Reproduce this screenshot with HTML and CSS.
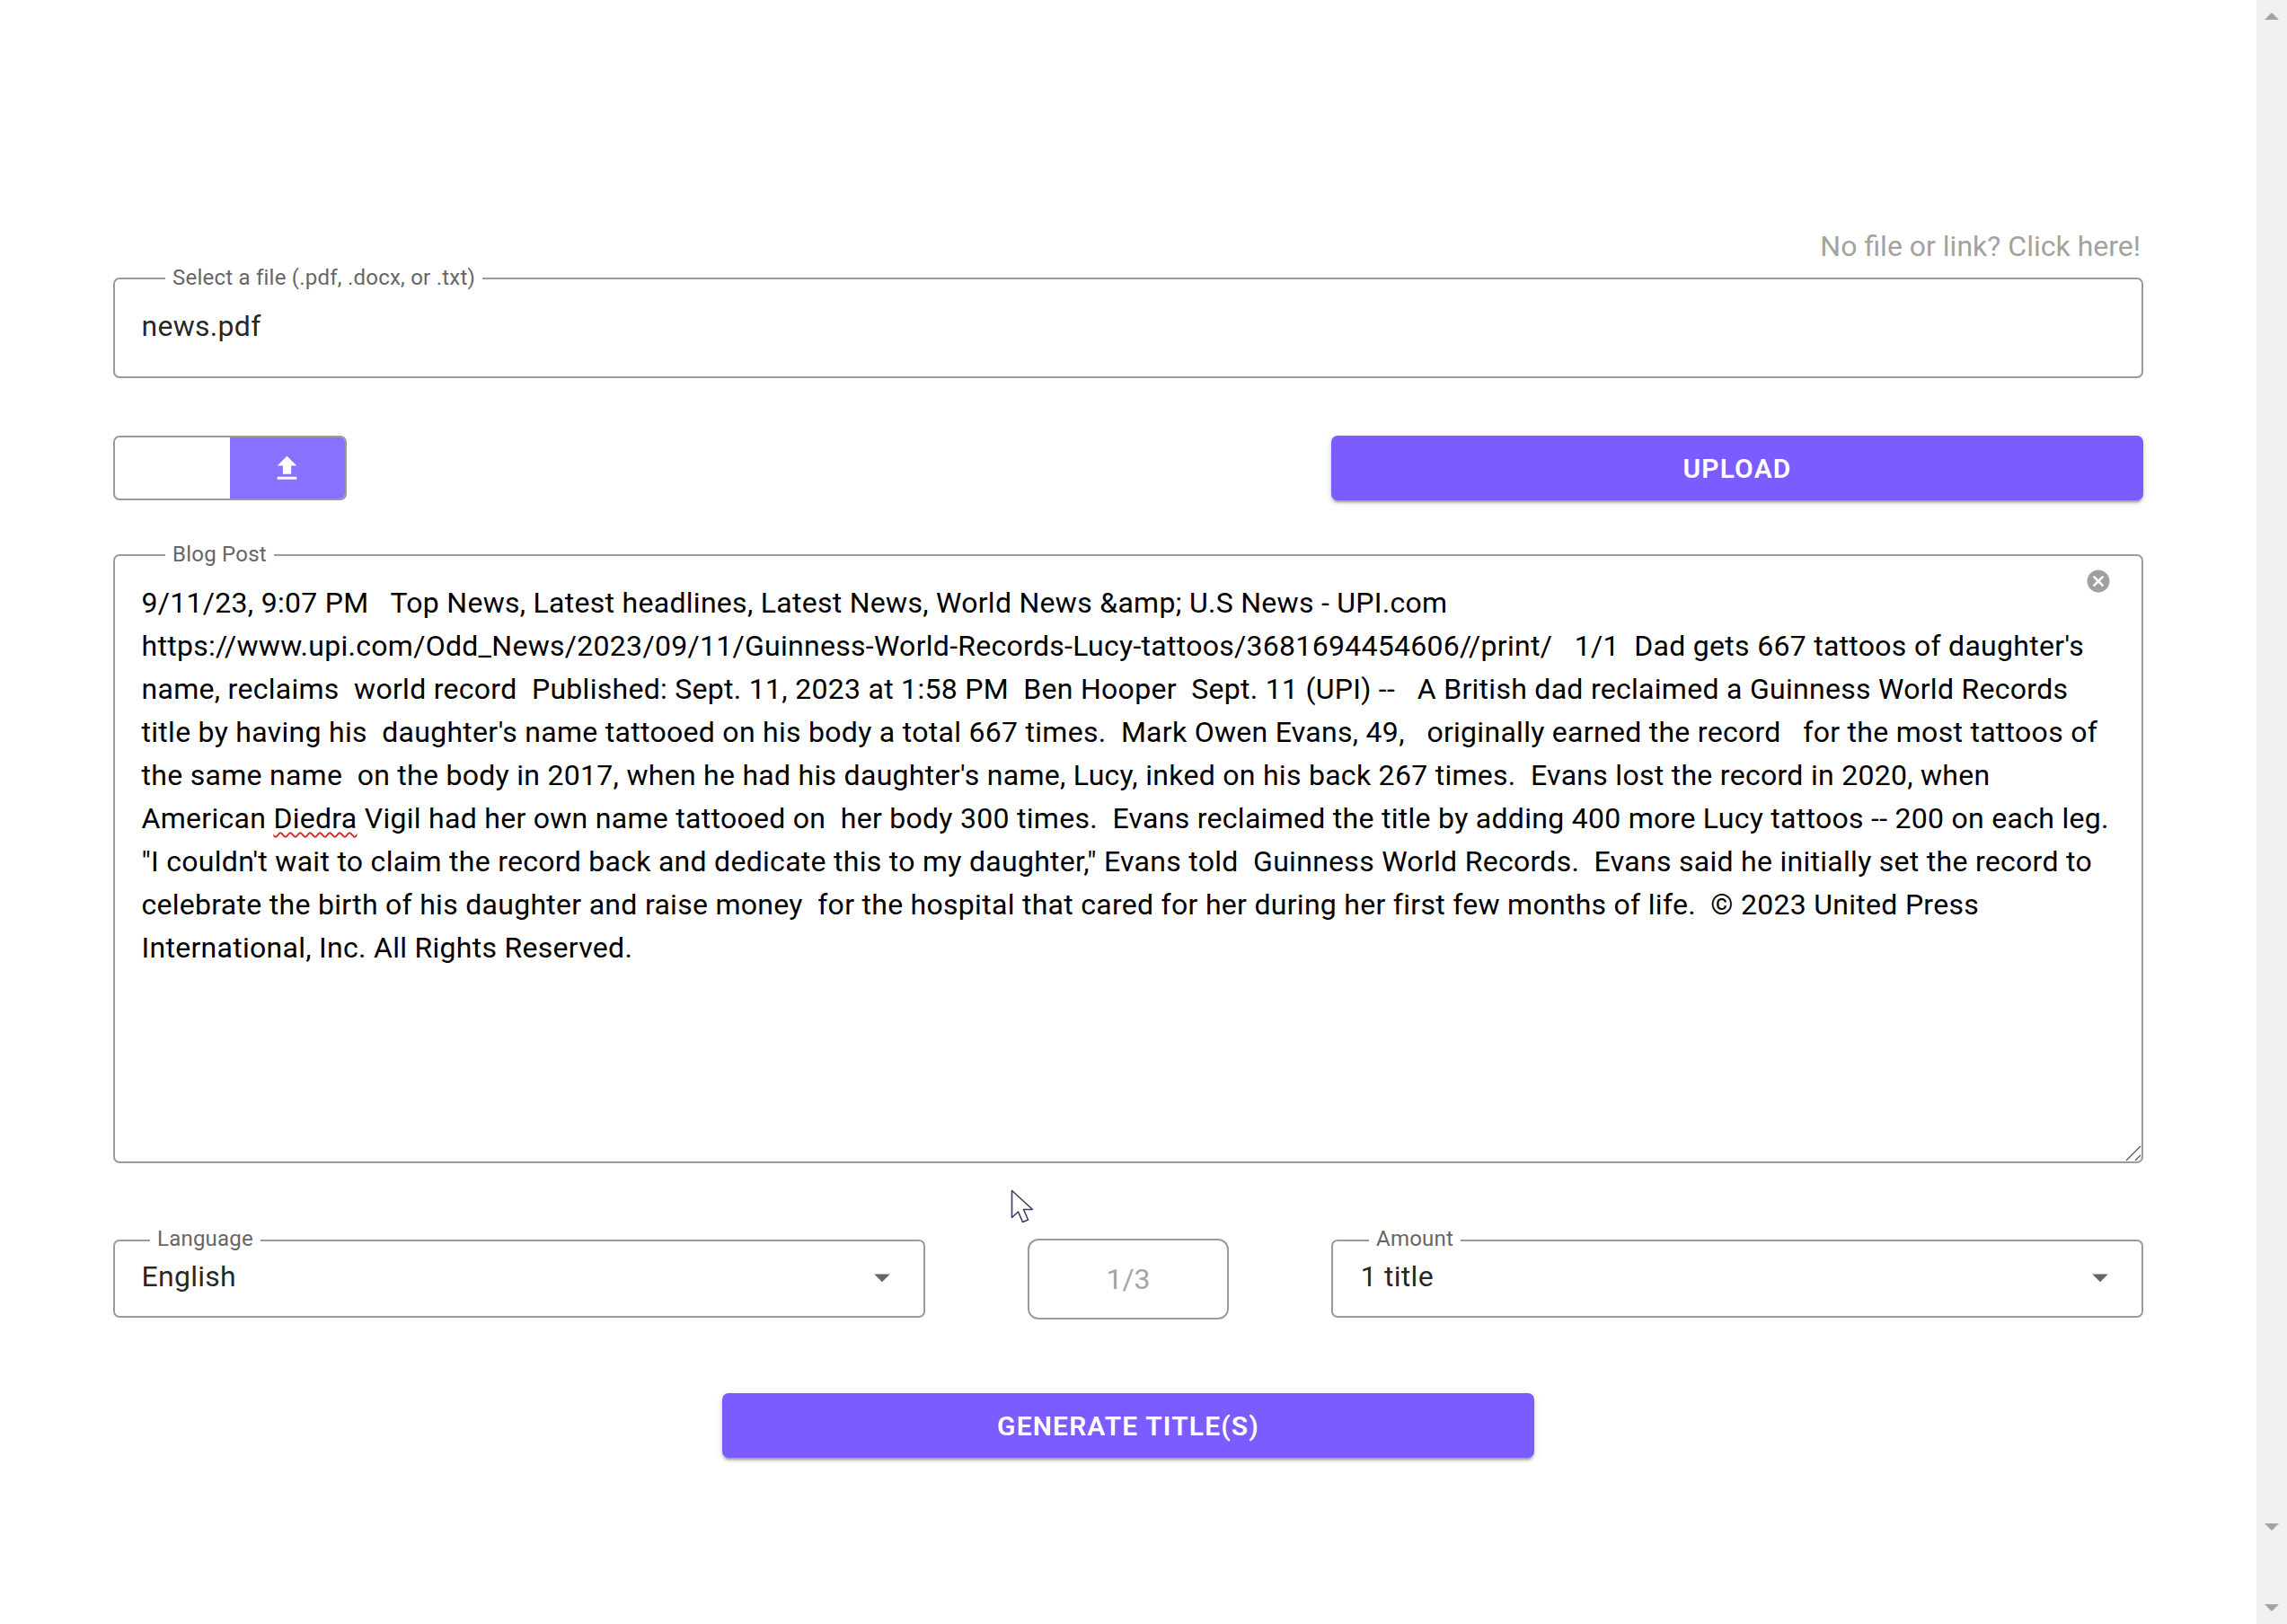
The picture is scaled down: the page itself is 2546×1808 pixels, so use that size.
FILE: index.html
```html
<!DOCTYPE html>
<html lang="en">
<head>
<meta charset="utf-8">
<title>Generate titles</title>
<link rel="stylesheet" href="styles.css">
</head>
<body>
<div class="page">
  <main class="main">
    <p class="hint">No file or link? Click here!</p>
    <fieldset class="field field-file">
      <legend class="label label-wide">Select a file (.pdf, .docx, or .txt)</legend>
      <div class="file-value">news.pdf</div>
    </fieldset>
    <div class="upload-row">
      <div class="picker">
        <div class="picker-empty"></div>
        <div class="picker-btn">
          <svg class="picker-icon" viewBox="0 0 24 24"><path d="M5 20h14v-2H5v2zm0-10h4v6h6v-6h4l-7-7-7 7z"/></svg>
        </div>
      </div>
      <button class="btn btn-upload" type="button">Upload</button>
    </div>
    <fieldset class="field field-post">
      <legend class="label label-wide">Blog Post</legend>
      <svg class="clear-icon" viewBox="0 0 24 24"><path d="M12 2C6.47 2 2 6.47 2 12s4.47 10 10 10 10-4.47 10-10S17.53 2 12 2zm5 13.59L15.59 17 12 13.41 8.41 17 7 15.59 10.59 12 7 8.41 8.41 7 12 10.59 15.59 7 17 8.41 13.41 12 17 15.59z"/></svg>
      <div class="post-text">
        <div class="post-block">9/11/23, 9:07 PM   Top News, Latest headlines, Latest News, World News &amp;amp; U.S News - UPI.com</div>
        <div class="post-block">https://www.upi.com/Odd_News/2023/09/11/Guinness-World-Records-Lucy-tattoos/3681694454606//print/   1/1  Dad gets 667 tattoos of daughter's name, reclaims  world record  Published: Sept. 11, 2023 at 1:58 PM  Ben Hooper  Sept. 11 (UPI) --   A British dad reclaimed a Guinness World Records title by having his  daughter's name tattooed on his body a total 667 times.  Mark Owen Evans, 49,   originally earned the record   for the most tattoos of the same name  on the body in 2017, when he had his daughter's name, Lucy, inked on his back 267 times.  Evans lost the record in 2020, when</div>
        <div class="post-block">American <span class="misspelt">Diedra</span> Vigil had her own name tattooed on  her body 300 times.  Evans reclaimed the title by adding 400 more Lucy tattoos -- 200 on each leg.</div>
        <div class="post-block">"I couldn't wait to claim the record back and dedicate this to my daughter," Evans told  Guinness World Records.  Evans said he initially set the record to celebrate the birth of his daughter and raise money  for the hospital that cared for her during her first few months of life.  © 2023 United Press International, Inc. All Rights Reserved.</div>
      </div>
      <svg class="grip" viewBox="0 0 18 18"><path d="M1 17 17 1M11 17l6-6" fill="none" stroke="#555" stroke-width="1.2"/></svg>
    </fieldset>
    <div class="options-row">
      <fieldset class="field field-select">
        <legend class="label label-narrow">Language</legend>
        <span class="select-value">English</span>
        <svg class="caret" viewBox="0 0 24 24"><path d="M7 10l5 5 5-5z"/></svg>
      </fieldset>
      <div class="counter">1/3</div>
      <fieldset class="field field-select">
        <legend class="label label-amount">Amount</legend>
        <span class="select-value select-value-amount">1 title</span>
        <svg class="caret" viewBox="0 0 24 24"><path d="M7 10l5 5 5-5z"/></svg>
      </fieldset>
    </div>
    <div class="generate-row">
      <button class="btn btn-generate" type="button">Generate title(s)</button>
    </div>
    <svg class="cursor" viewBox="0 0 26 38"><path d="M1.5 1.5v30l7-6.5 5 11.5 6-2.5-5-11.5h10z" fill="#fff" stroke="#3b3f66" stroke-width="1.6" stroke-linejoin="round"/></svg>
  </main>
  <aside class="scrollbar">
    <svg class="sb-arrow" viewBox="0 0 16 8"><path d="M8 0l8 8H0z"/></svg>
    <svg class="sb-arrow sb-arrow-inner" viewBox="0 0 16 8"><path d="M0 0h16L8 8z"/></svg>
    <svg class="sb-arrow sb-arrow-outer" viewBox="0 0 16 8"><path d="M0 0h16L8 8z"/></svg>
  </aside>
</div>
</body>
</html>
```
FILE: styles.css
```css
* { box-sizing: border-box; }
html, body { margin: 0; height: 100%; overflow: hidden; background: #fff; }
body { font-family: Roboto, "Liberation Sans", sans-serif; color: rgba(0,0,0,.87); }

.page { display: flex; height: 1808px; }
.main { position: relative; flex: 1; padding: 254px 126px 0 126px; }

.hint {
  margin: 0 0 2px;
  text-align: right;
  padding-right: 3px;
  font-size: 32px;
  line-height: 40px;
  color: #a4a29e;
}

.field {
  position: relative;
  margin: 0;
  min-width: 0;
  border: 2px solid #9b9b9b;
  border-radius: 7px;
  padding: 0;
}
.label {
  padding: 0 8px 2px;
  font-size: 24px;
  line-height: 26px;
  height: 28px;
  letter-spacing: .00938em;
  color: #666;
}
.label-wide { margin-left: 26.5px; }
.label-narrow { margin-left: 9.5px; padding-bottom: 4px; line-height: 24px; }
.label-amount { margin-left: 10.5px; padding-bottom: 4px; line-height: 24px; }

.field-file { height: 125px; padding: 0 29.5px; }
.file-value { font-size: 32px; line-height: 38px; padding-top: 20px; letter-spacing: .285px; }

.upload-row { display: flex; justify-content: space-between; margin-top: 64px; }
.picker {
  display: flex;
  width: 260px;
  height: 72px;
  border: 2px solid #9b9b9b;
  border-radius: 7px;
  overflow: hidden;
}
.picker-empty { width: 128px; }
.picker-btn { flex: 1; display: flex; align-items: center; justify-content: center; padding-right: 1px; background: #8a70ff; }
.picker-icon { width: 37px; height: 37px; fill: #fff; }

.btn {
  display: block;
  border: 0;
  border-radius: 7px;
  background: #7c5cff;
  color: #fff;
  font-family: inherit;
  font-size: 30px;
  font-weight: 600;
  letter-spacing: 1.15px;
  text-transform: uppercase;
  box-shadow: 0 5px 2px -3px rgba(0,0,0,.2), 0 3px 3px 0 rgba(0,0,0,.14), 0 2px 8px 0 rgba(0,0,0,.12);
}
.btn-upload { width: 904px; height: 72px; }

.field-post { height: 691px; margin-top: 47px; padding: 0 29.5px; }
.post-text {
  padding-top: 15px;
  font-size: 32px;
  line-height: 48px;
  letter-spacing: .285px;
  color: #000;
}
.post-block { white-space: pre-wrap; }
.misspelt { text-decoration: underline wavy #d9262b; text-decoration-thickness: 1.6px; text-underline-offset: 4px; }
.clear-icon { position: absolute; top: 0; right: 33px; width: 30px; height: 30px; fill: #a0a0a0; }
.grip { position: absolute; right: 0; bottom: 0; width: 18px; height: 18px; }

.options-row {
  display: grid;
  grid-template-columns: 904px 224px 904px;
  justify-content: space-between;
  align-items: end;
  margin-top: 72px;
}
.field-select { position: relative; height: 100px; padding: 0 29.5px; }
.select-value { display: block; font-size: 32px; line-height: 38px; padding-top: 7px; letter-spacing: .285px; }
.select-value-amount { padding-left: 1px; }
.caret { position: absolute; right: 25px; top: 6px; width: 42px; height: 42px; fill: #666; }

.counter {
  display: flex;
  align-items: center;
  justify-content: center;
  height: 90px;
  margin-bottom: -2px;
  border: 2px solid #9b9b9b;
  border-radius: 12px;
  font-size: 32px;
  color: #a5a5a5;
}

.generate-row { display: flex; justify-content: center; margin-top: 84px; }
.btn-generate { width: 904px; height: 72px; }

.cursor { position: absolute; left: 1125px; top: 1324px; width: 26px; height: 38px; }

.scrollbar {
  display: flex;
  flex-direction: column;
  align-items: center;
  width: 34px;
  padding: 14px 0;
  background: #f0f0f0;
}
.sb-arrow { width: 16px; height: 8px; fill: #a3a3a3; flex: none; }
.sb-arrow-inner { margin-top: auto; }
.sb-arrow-outer { margin-top: 82px; }
```
